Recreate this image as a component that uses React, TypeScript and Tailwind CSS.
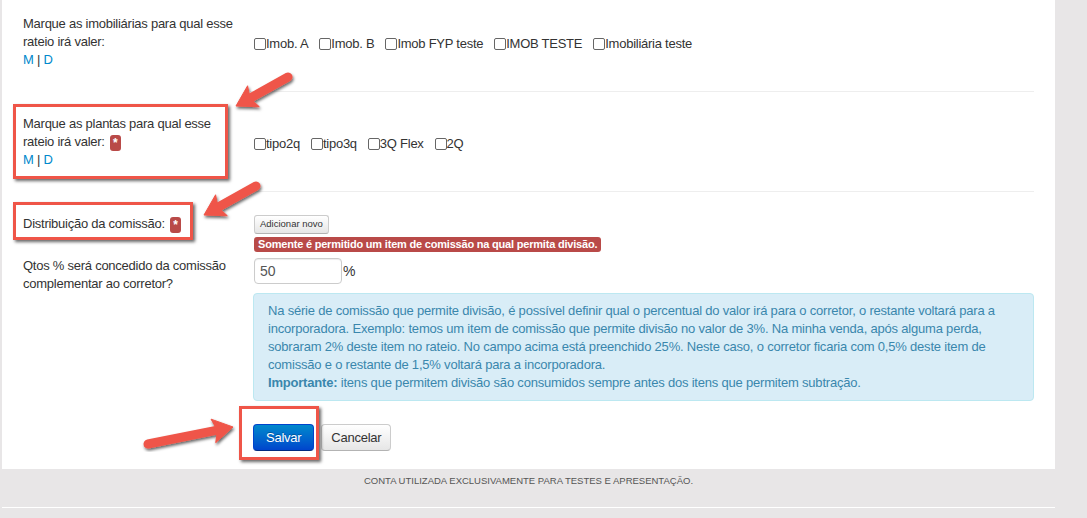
import React from 'react'

const IMOBS = ['Imob. A', 'Imob. B', 'Imob FYP teste', 'IMOB TESTE', 'Imobiliária teste']
const PLANTAS = ['tipo2q', 'tipo3q', '3Q Flex', '2Q']

// setas de anotação: [cauda x, cauda y, ponta x, ponta y]
const ARROWS: [number, number, number, number][] = [
  [288, 77, 236, 106],
  [256, 186, 204, 215],
  [148, 444, 233, 427],
]

function Check({ label }: { label: string }) {
  return (
    <span className="flex items-center text-[13px] leading-[18px] tracking-[-0.25px] text-[#333]">
      <span className="inline-block w-[12px] h-[12px] border border-[#666] rounded-[2px] bg-white" />
      {label}
    </span>
  )
}

function Req() {
  return (
    <span className="inline-block w-[11px] h-[16px] -my-[2px] ml-[5px] align-middle rounded-[3px] bg-[#b94a48] text-center text-white text-[12px] font-bold leading-[16px]">
      *
    </span>
  )
}

function MD() {
  return (
    <div>
      <span className="text-[#0088cc]">M</span> | <span className="text-[#0088cc]">D</span>
    </div>
  )
}

function Arrow({ a }: { a: [number, number, number, number] }) {
  const [x1, y1, x2, y2] = a
  const len = Math.hypot(x2 - x1, y2 - y1)
  const ux = (x2 - x1) / len
  const uy = (y2 - y1) / len
  const nx = -uy
  const ny = ux
  const L = 20
  const W = 12
  const bx = x2 - ux * L
  const by = y2 - uy * L
  const cx = bx + ux * 4
  const cy = by + uy * 4
  return (
    <g filter="url(#sh)">
      <line x1={x1} y1={y1} x2={cx} y2={cy} stroke="#ef5548" strokeWidth={9} strokeLinecap="round" />
      <polygon
        points={`${x2},${y2} ${bx + nx * W},${by + ny * W} ${cx},${cy} ${bx - nx * W},${by - ny * W}`}
        fill="#ef5548"
        strokeLinejoin="round"
        stroke="#ef5548"
        strokeWidth={1}
      />
    </g>
  )
}

const label = 'w-[230px] pr-[8px] text-[13px] leading-[18px] tracking-[-0.25px] text-[#333] whitespace-nowrap'

export default function App() {
  return (
    <div className="relative w-[1087px] h-[518px] overflow-hidden bg-[#e8e6e7] font-['Liberation_Sans',Arial,sans-serif]">
      <div className="ml-[2px] w-[1053px] bg-white pb-[18px]">

        {/* Imobiliárias */}
        <div className="flex items-center pl-[21px] pt-[15px] pb-[22px]">
          <div className={label}>
            Marque as imobiliárias para qual esse<br />
            rateio irá valer:
            <MD />
          </div>
          <div className="flex items-center gap-[11px] ml-[1px] pt-[3px]">
            {IMOBS.map(l => <Check key={l} label={l} />)}
          </div>
        </div>
        <div className="ml-[248px] mr-[21px] border-t border-[#eee]" />

        {/* Plantas */}
        <div className="flex items-center pl-[21px] pt-[23px] pb-[22px]">
          <div className={label}>
            Marque as plantas para qual esse<br />
            rateio irá valer:<Req />
            <MD />
          </div>
          <div className="flex items-center gap-[11px] ml-[1px] pt-[3px]">
            {PLANTAS.map(l => <Check key={l} label={l} />)}
          </div>
        </div>
        <div className="ml-[248px] mr-[21px] border-t border-[#eee]" />

        {/* Distribuição */}
        <div className="flex items-start pl-[21px] pt-[23px]">
          <div className={label}>
            Distribuição da comissão:<Req />
          </div>
          <div className="flex flex-col items-start ml-[1px]">
            <button className="h-[19px] px-[5px] text-[9.5px] text-[#333] rounded-[3px] border border-[#ccc] border-b-[#b3b3b3] bg-linear-to-b from-white to-[#e6e6e6]">
              Adicionar novo
            </button>
            <span className="mt-[3px] h-[15px] px-[4px] rounded-[3px] bg-[#b94a48] text-white text-[11px] font-bold leading-[15px] tracking-[-0.2px] whitespace-nowrap">
              Somente é permitido um item de comissão na qual permita divisão.
            </span>
          </div>
        </div>

        {/* Percentual */}
        <div className="flex items-start pl-[21px] mt-[6px]">
          <div className={`${label} -mt-[1px]`}>
            Qtos % será concedido da comissão<br />
            complementar ao corretor?
          </div>
          <div className="flex-1 mr-[21px]">
            <div className="flex items-center ml-[1px]">
              <input
                readOnly
                defaultValue="50"
                className="w-[88px] h-[26px] px-[5px] rounded-[4px] border border-[#ccc] text-[14px] text-[#555] shadow-[inset_0_1px_1px_rgba(0,0,0,0.075)] outline-none"
              />
              <span className="ml-[1px] text-[14px] text-[#333]">%</span>
            </div>
            <div className="mt-[9px] pt-[8px] pb-[8px] pl-[14px] pr-[20px] rounded-[4px] border border-[#bce8f1] bg-[#d9edf7] text-[#3a87ad] text-[13px] leading-[18px] tracking-[-0.2px] whitespace-nowrap">
              Na série de comissão que permite divisão, é possível definir qual o percentual do valor irá para o corretor, o restante voltará para a<br />
              incorporadora. Exemplo: temos um item de comissão que permite divisão no valor de 3%. Na minha venda, após alguma perda,<br />
              sobraram 2% deste item no rateio. No campo acima está preenchido 25%. Neste caso, o corretor ficaria com 0,5% deste item de<br />
              comissão e o restante de 1,5% voltará para a incorporadora.<br />
              <b>Importante:</b> itens que permitem divisão são consumidos sempre antes dos itens que permitem subtração.
            </div>
            <div className="flex items-center gap-[7px] mt-[23px]">
              <button className="h-[27px] px-[12px] rounded-[4px] border border-[#0044cc] border-b-[#002a80] bg-linear-to-b from-[#0088cc] to-[#0044cc] text-white text-[13px] tracking-[-0.25px] [text-shadow:0_-1px_0_rgba(0,0,0,0.25)]">
                Salvar
              </button>
              <button className="h-[27px] px-[9px] rounded-[4px] border border-[#ccc] border-b-[#b3b3b3] bg-linear-to-b from-white to-[#e6e6e6] text-[#333] text-[13px] tracking-[-0.25px]">
                Cancelar
              </button>
            </div>
          </div>
        </div>
      </div>

      {/* Rodapé */}
      <div className="ml-[2px] w-[1053px]">
        <p className="pt-[6px] h-[38px] text-center text-[9.5px] leading-[12px] text-[#555]">
          CONTA UTILIZADA EXCLUSIVAMENTE PARA TESTES E APRESENTAÇÃO.
        </p>
        <div className="border-t border-white" />
      </div>

      {/* Anotações */}
      <div className="absolute left-[13px] top-[104px] w-[215px] h-[75px] border-[3px] border-[#ef5548] shadow-[2px_2px_3px_rgba(0,0,0,0.6)]" />
      <div className="absolute left-[13px] top-[202px] w-[180px] h-[38px] border-[3px] border-[#ef5548] shadow-[2px_2px_3px_rgba(0,0,0,0.6)]" />
      <div className="absolute left-[239px] top-[406px] w-[80px] h-[54px] border-[3px] border-[#ef5548] shadow-[2px_2px_3px_rgba(0,0,0,0.6)]" />
      <svg className="absolute left-0 top-0 pointer-events-none" width={1087} height={518}>
        <defs>
          <filter id="sh" x="-30%" y="-30%" width="160%" height="160%">
            <feDropShadow dx="1" dy="2" stdDeviation="1.5" floodColor="#000" floodOpacity="0.6" />
          </filter>
        </defs>
        {ARROWS.map((a, i) => <Arrow key={i} a={a} />)}
      </svg>
    </div>
  )
}
